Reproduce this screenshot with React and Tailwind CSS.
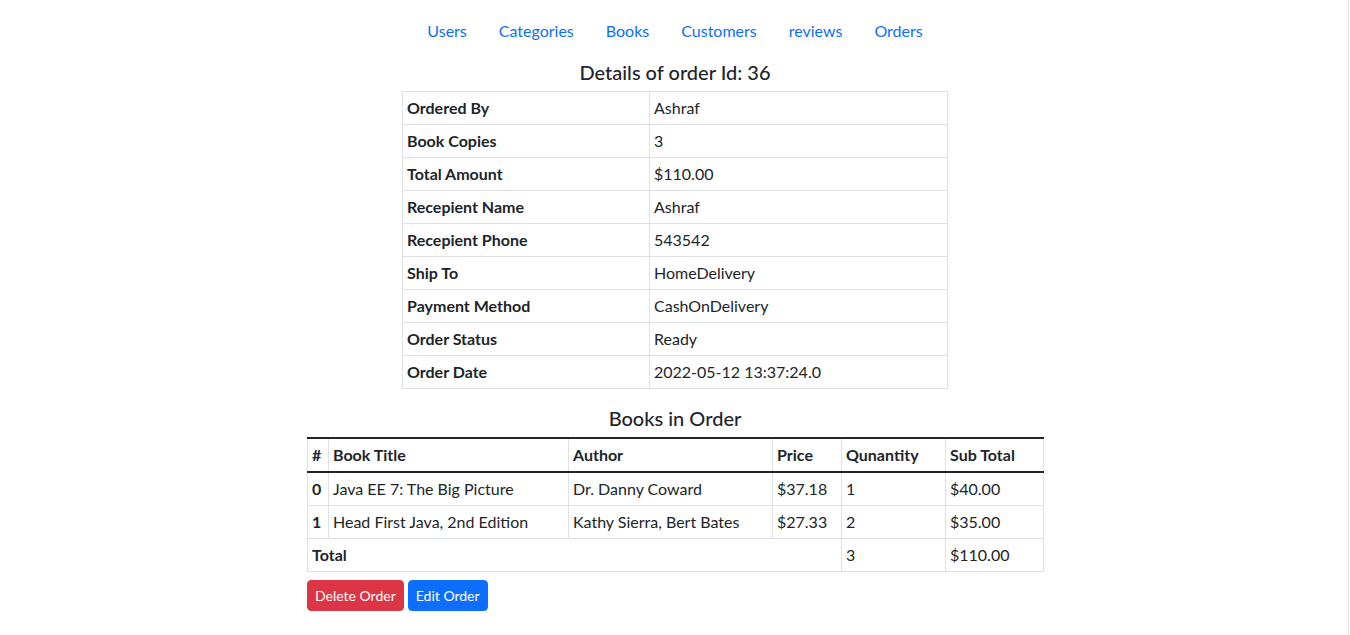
import React from "react";

const navItems = ["Users", "Categories", "Books", "Customers", "reviews", "Orders"];

const details = [
  ["Ordered By", "Ashraf"],
  ["Book Copies", "3"],
  ["Total Amount", "$110.00"],
  ["Recepient Name", "Ashraf"],
  ["Recepient Phone", "543542"],
  ["Ship To", "HomeDelivery"],
  ["Payment Method", "CashOnDelivery"],
  ["Order Status", "Ready"],
  ["Order Date", "2022-05-12 13:37:24.0"],
];

const books = [
  { title: "Java EE 7: The Big Picture", author: "Dr. Danny Coward", price: "$37.18", qty: "1", sub: "$40.00" },
  { title: "Head First Java, 2nd Edition", author: "Kathy Sierra, Bert Bates", price: "$27.33", qty: "2", sub: "$35.00" },
];

const cell = "border border-[#dee2e6] px-[4px] py-[4px] leading-[24px] text-left align-top";

export default function App() {
  return (
    <div className="min-h-screen bg-white text-[16px] text-[#212529] font-['Lato','Liberation_Sans',sans-serif] pt-[11px]">
      <nav className="flex justify-center">
        {navItems.map((item) => (
          <a key={item} href="#" className="px-4 py-2 leading-[24px] text-[#0d6efd]">
            {item}
          </a>
        ))}
      </nav>

      <h5 className="mt-[9px] mb-[7px] text-center text-[20px] leading-[24px] font-medium">
        Details of order Id: 36
      </h5>
      <table className="mx-auto w-[546px] table-fixed border-collapse">
        <tbody>
          {details.map(([label, value]) => (
            <tr key={label}>
              <th className={cell + " w-[247px] font-bold"}>{label}</th>
              <td className={cell}>{value}</td>
            </tr>
          ))}
        </tbody>
      </table>

      <h5 className="mt-[17px] mb-[7px] text-center text-[20px] leading-[24px] font-medium">
        Books in Order
      </h5>
      <div className="mx-auto w-[736px]">
        <table className="w-full table-fixed border-collapse">
          <thead>
            <tr className="border-t-2 border-b-2 border-t-[#212529] border-b-[#212529]">
              <th className={cell + " w-[21px] font-bold"}>#</th>
              <th className={cell + " w-[240px] font-bold"}>Book Title</th>
              <th className={cell + " w-[204px] font-bold"}>Author</th>
              <th className={cell + " w-[69px] font-bold"}>Price</th>
              <th className={cell + " w-[104px] font-bold"}>Qunantity</th>
              <th className={cell + " w-[98px] font-bold"}>Sub Total</th>
            </tr>
          </thead>
          <tbody>
            {books.map((b, i) => (
              <tr key={i}>
                <th className={cell + " font-bold"}>{i}</th>
                <td className={cell}>{b.title}</td>
                <td className={cell}>{b.author}</td>
                <td className={cell}>{b.price}</td>
                <td className={cell}>{b.qty}</td>
                <td className={cell}>{b.sub}</td>
              </tr>
            ))}
            <tr>
              <th colSpan={4} className={cell + " font-bold"}>Total</th>
              <td className={cell}>3</td>
              <td className={cell}>$110.00</td>
            </tr>
          </tbody>
        </table>
        <div className="mt-2 flex gap-1">
          <button className="rounded border border-[#dc3545] bg-[#dc3545] px-[7px] py-1 text-[14px] leading-[21px] text-white">
            Delete Order
          </button>
          <button className="rounded border border-[#0d6efd] bg-[#0d6efd] px-[7px] py-1 text-[14px] leading-[21px] text-white">
            Edit Order
          </button>
        </div>
      </div>

      <div className="fixed top-0 bottom-0 right-[1px] w-px bg-[#e6e6e6]" />
    </div>
  );
}
